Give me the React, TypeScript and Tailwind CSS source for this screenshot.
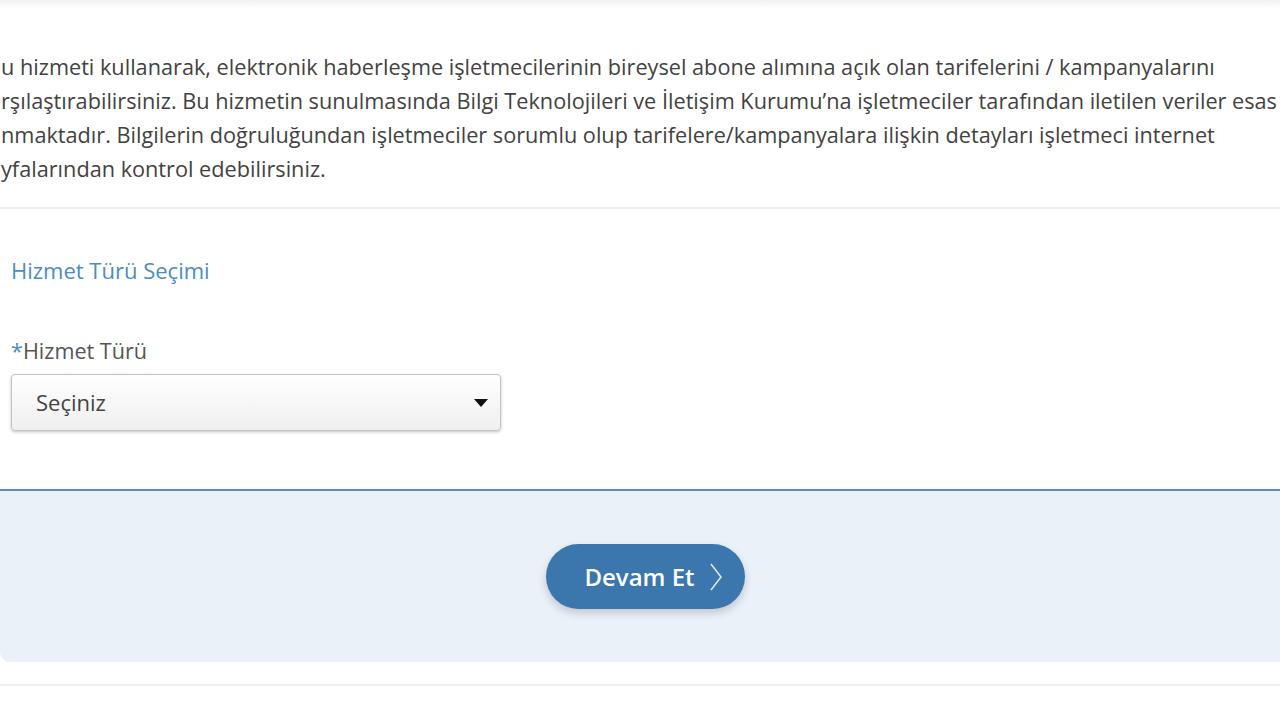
import React from "react";

const lines = [
  "u hizmeti kullanarak, elektronik haberleşme işletmecilerinin bireysel abone alımına açık olan tarifelerini / kampanyalarını",
  "rşılaştırabilirsiniz. Bu hizmetin sunulmasında Bilgi Teknolojileri ve İletişim Kurumu’na işletmeciler tarafından iletilen veriler esas",
  "nmaktadır. Bilgilerin doğruluğundan işletmeciler sorumlu olup tarifelere/kampanyalara ilişkin detayları işletmeci internet",
  "yfalarından kontrol edebilirsiniz.",
];

function App() {
  return (
    <div
      className="w-[1280px] h-[720px] overflow-hidden bg-white"
      style={{ fontFamily: '"Open Sans", "Noto Sans", sans-serif' }}
    >
      <div className="h-[8px] bg-gradient-to-b from-[#f1f1f1] to-white" />

      {/* intro */}
      <div className="pt-[42px] pb-[21px] pl-[1px] text-[21.7px] leading-[34px] text-[#424242] whitespace-nowrap">
        {lines.map((l, i) => (
          <p key={i}>{l}</p>
        ))}
      </div>
      <div className="h-[2px] bg-[#ededed]" />

      {/* form */}
      <div className="pl-[11px] pt-[47px]">
        <h2 className="text-[22px] leading-[28px] text-[#4b8dbf]">Hizmet Türü Seçimi</h2>

        <label className="mt-[53px] block text-[21.6px] leading-[28px] text-[#555]">
          <span className="text-[#4b8dbf]">*</span>Hizmet Türü
        </label>
        <div className="mt-[9px] w-[490px] h-[57px] flex items-center justify-between pl-[24px] pr-[12px] rounded-[4px] border border-[#c4c4c4] bg-gradient-to-b from-white to-[#efefef] shadow-[0_1px_3px_rgba(0,0,0,0.25)]">
          <span className="text-[22px] text-[#444]">Seçiniz</span>
          <svg width="14" height="8" viewBox="0 0 14 8">
            <path d="M0 0h14L7 8z" fill="#111" />
          </svg>
        </div>
      </div>

      {/* actions */}
      <div className="mt-[58px] h-[2px] bg-[#5b8cc0]" />
      <div className="h-[171px] bg-[#eaf1f9] rounded-bl-[10px] flex items-center justify-center">
        <button className="ml-[11px] w-[199px] h-[65px] pl-[16px] rounded-full bg-[#3b76ad] text-white text-[24px] font-semibold flex items-center justify-center gap-[14px] shadow-[0_4px_8px_rgba(0,0,0,0.18)]">
          <span>Devam Et</span>
          <svg width="14" height="30" viewBox="0 0 14 30" fill="none">
            <path d="M2 2l10 13L2 28" stroke="#dfe9f4" strokeWidth="1.5" />
          </svg>
        </button>
      </div>
      <div className="h-[22px] bg-white" />
      <div className="h-[2px] bg-[#f0f0f0]" />
    </div>
  );
}

export default App;
